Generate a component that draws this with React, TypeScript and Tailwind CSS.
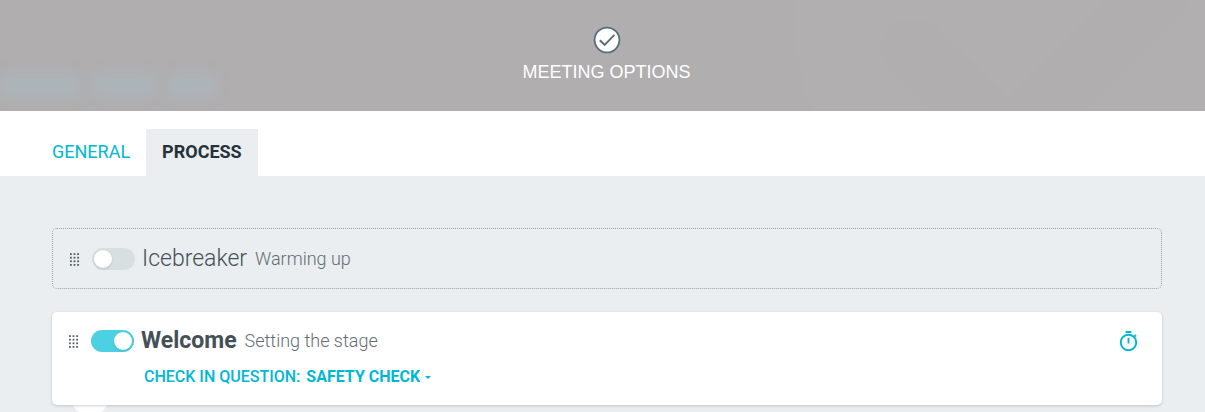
import React, { useState } from "react";

function CheckCircle() {
  return (
    <svg className="relative" width="28" height="28" viewBox="0 0 28 28" fill="none" aria-hidden="true">
      <circle cx="14" cy="14" r="12.4" fill="#fff" stroke="#546e7a" strokeWidth="1.8" />
      <path d="M6.8 14.2 11.6 18.8 21.4 8.8" stroke="#546e7a" strokeWidth="1.9" />
    </svg>
  );
}

function BannerArt() {
  return (
    <svg
      className="pointer-events-none absolute top-0 right-0 h-full"
      width="425"
      height="111"
      viewBox="0 0 425 111"
      aria-hidden="true"
    >
      <path d="M17 0V46Q20 84 34 111H425V0Z" fill="#b1afb0" />
      <path
        d="M152 111 110 70C98 56 98 40 110 28C124 15 144 16 158 28L228 97L325 0H413L304 111Z"
        fill="#b0aeaf"
      />
    </svg>
  );
}

function Grip() {
  const rows = [0, 4, 8, 12];
  const cols = [0, 4, 8];
  return (
    <svg width="9" height="13" viewBox="0 0 10 14" fill="#546066" aria-hidden="true">
      {rows.map((y) =>
        cols.map((x) => <rect key={`${x}-${y}`} x={x} y={y} width="2" height="2" />)
      )}
    </svg>
  );
}

function Stopwatch() {
  return (
    <svg width="23" height="23" viewBox="0 0 24 24" fill="#00b8d4" aria-hidden="true">
      <path d="M15 1H9v2h6V1zm-4 13h2V8h-2v6zm8.030-6.610 1.420-1.420c-.430-.510-.900-.990-1.410-1.410l-1.420 1.420C16.070 4.740 14.120 4 12 4c-4.970 0-9 4.030-9 9s4.020 9 9 9 9-4.030 9-9c0-2.120-.740-4.070-1.970-5.610zM12 20c-3.870 0-7-3.130-7-7s3.130-7 7-7 7 3.130 7 7-3.130 7-7 7z" />
    </svg>
  );
}

function StepHeading({
  id,
  title,
  subtitle,
  enabled,
  onToggle,
}: {
  id: string;
  title: string;
  subtitle: string;
  enabled: boolean;
  onToggle: () => void;
}) {
  return (
    <div className="flex items-center">
      <span className="mr-[13px] cursor-grab">
        <Grip />
      </span>
      <input
        id={id}
        type="checkbox"
        role="switch"
        checked={enabled}
        onChange={onToggle}
        className="mr-[7px] h-[22px] w-[43px] shrink-0 cursor-pointer appearance-none rounded-full bg-[#d8dfe1] p-0.5 before:block before:size-[18px] before:rounded-full before:bg-white before:shadow-sm before:content-[''] checked:bg-[#4dd0e1] checked:before:ml-[21px]"
      />
      <div className="flex items-center gap-2">
        <label
          htmlFor={id}
          className={
            enabled
              ? "text-[23px] leading-8 font-bold text-[#455056]"
              : "text-[23px] leading-8 font-light text-[#455056]"
          }
        >
          {title}
        </label>
        <span className="text-[18px] leading-8 font-light text-[#626c71]">{subtitle}</span>
      </div>
    </div>
  );
}

export default function App() {
  const [tab, setTab] = useState("PROCESS");
  const [icebreaker, setIcebreaker] = useState(false);
  const [welcome, setWelcome] = useState(true);

  return (
    <div className="flex h-screen flex-col overflow-hidden bg-[#eaeef1] font-[Roboto,sans-serif]">
      <header className="relative flex shrink-0 flex-col items-center overflow-hidden bg-[#b0aeaf] pt-[26px] pb-[27px] pl-2">
        <BannerArt />
        <div className="absolute top-[74px] left-0 flex gap-3 blur-[6px]" aria-hidden="true">
          <span className="h-[22px] w-20 bg-[#acb4b9]" />
          <span className="h-[22px] w-[64px] bg-[#acb4b9]" />
          <span className="h-[22px] w-[48px] bg-[#acb4b9]" />
        </div>
        <CheckCircle />
        <h1 className="relative mt-1.5 font-['Liberation_Sans',Arial,sans-serif] text-[18px] leading-6 text-white">
          MEETING OPTIONS
        </h1>
      </header>

      <nav className="flex shrink-0 bg-white pt-[18px] pl-9" role="tablist">
        {["GENERAL", "PROCESS"].map((name) => (
          <button
            key={name}
            type="button"
            role="tab"
            aria-selected={tab === name}
            onClick={() => setTab(name)}
            className={
              tab === name
                ? "cursor-pointer bg-[#eaeef1] px-4 pt-[11px] pb-3 text-[18px] leading-6 font-bold text-[#263238]"
                : "cursor-pointer px-4 pt-[11px] pb-3 text-[18px] leading-6 text-[#00b8d4]"
            }
          >
            {name}
          </button>
        ))}
      </nav>

      <main className="flex flex-col gap-[23px] pt-[52px] pr-[43px] pl-[52px]">
        <section className="rounded-[5px] border border-dotted border-[#90a4ae] px-[17px] pt-[14px] pb-[13px]">
          <StepHeading
            id="icebreaker"
            title="Icebreaker"
            subtitle="Warming up"
            enabled={icebreaker}
            onToggle={() => setIcebreaker(!icebreaker)}
          />
        </section>

        <div className="relative">
          <span className="absolute -bottom-[10px] left-[18px] size-10 rounded-full bg-white" />
          <section className="relative rounded-[5px] bg-white px-[17px] pt-[13px] pb-4 shadow-[0_1px_3px_rgba(38,50,56,0.22)]">
            <div className="flex items-center justify-between">
              <StepHeading
                id="welcome"
                title="Welcome"
                subtitle="Setting the stage"
                enabled={welcome}
                onToggle={() => setWelcome(!welcome)}
              />
              <button type="button" aria-label="Timer" className="mr-[5px] cursor-pointer">
                <Stopwatch />
              </button>
            </div>
            <div className="mt-2 flex items-center gap-[6px] pl-[75px] text-[16px] leading-6 text-[#00b8d4]">
              <label htmlFor="question" className="font-medium">
                CHECK IN QUESTION:
              </label>
              <span className="flex items-center gap-[5px]">
                <select
                  id="question"
                  className="field-sizing-content cursor-pointer appearance-none bg-transparent font-bold"
                >
                  <option>SAFETY CHECK</option>
                </select>
                <svg width="6" height="3" viewBox="0 0 6 3" fill="#00b8d4" aria-hidden="true">
                  <path d="M0 0h6L3 3z" />
                </svg>
              </span>
            </div>
          </section>
        </div>
      </main>
    </div>
  );
}
